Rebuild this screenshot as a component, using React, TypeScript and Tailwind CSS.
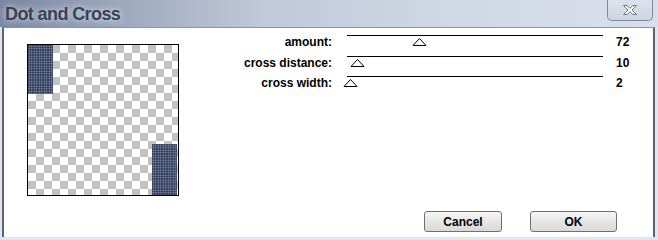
const sliders = [
	{ label: 'amount:', thumb: 65, value: '72', h: 'h-[21px]' },
	{ label: 'cross distance:', thumb: 3, value: '10', h: 'h-[20px]' },
	{ label: 'cross width:', thumb: -4, value: '2', h: 'h-[20px]' }
];

const dots =
	'bg-[#2d3955] bg-[radial-gradient(circle,#8591ad_0.7px,transparent_1px)] bg-size-[2.5px_2.5px]';

const Thumb = ({ left }: { left: number }) => (
	<svg
		className="absolute top-[2px]"
		style={{ left }}
		width="15"
		height="8"
		viewBox="0 0 15 8"
	>
		<path d="M7.5 0.5 L14 7.5 L1 7.5 Z" fill="#fff" stroke="#000" strokeWidth="1" />
	</svg>
);

const App = () => {
	return (
		<div className="flex h-[240px] w-[658px] flex-col overflow-hidden bg-[#dfe6f0] font-['Liberation_Sans',Arial,sans-serif]">
			{/* title bar */}
			<div className="flex h-[27px] shrink-0 items-start bg-[linear-gradient(90deg,#7a87a0_0%,#9ca8bc_18%,#c0c9d8_40%,#d1d9e6_70%,#d8dfea_100%)]">
				<span className="pl-[5px] pt-[4px] text-[18px] font-bold leading-[20px] tracking-[-0.6px] text-[#394354] [text-shadow:0_0_6px_#e8edf5]">
					Dot and Cross
				</span>
				<button className="ml-auto mr-[5px] flex h-[21px] w-[46px] items-center justify-center rounded-b-[5px] border border-t-0 border-[#7f8898] bg-[linear-gradient(#dde3ec,#cdd5e2)]">
					<svg width="16" height="12" viewBox="0 0 16 12">
						<path
							d="M1.5 1.5 H5 L8 4.3 L11 1.5 H14.5 L10 6 L14.5 10.5 H11 L8 7.7 L5 10.5 H1.5 L6 6 Z"
							fill="#fff"
							stroke="#6f7888"
							strokeWidth="1"
							strokeLinejoin="round"
						/>
					</svg>
				</button>
			</div>

			{/* client area */}
			<div className="mb-[3px] ml-[2px] mr-[3px] flex flex-1 flex-col border-x-2 border-t border-x-[#5d6470] border-t-[#8b94a4] bg-white">
				<div className="flex items-start">
					<div className="ml-[23px] mt-[16px] h-[152px] w-[152px] shrink-0 border border-black">
						<div className="relative h-full w-full bg-[conic-gradient(#c2c2c2_25%,#fff_0_50%,#c2c2c2_0_75%,#fff_0)] bg-size-[16px_16px]">
							<div className={`absolute left-0 top-0 h-[49px] w-[25px] ${dots}`} />
							<div className={`absolute bottom-0 right-[1px] h-[51px] w-[25px] ${dots}`} />
						</div>
					</div>

					<div className="ml-[41px] mt-[7px] flex flex-col text-[12px] font-bold leading-[13px] text-black">
						{sliders.map(s => (
							<div key={s.label} className={`flex ${s.h}`}>
								<span className="w-[112px] pt-[1px] text-right">{s.label}</span>
								<div className="relative ml-[15px] w-[256px] border-t border-black">
									<Thumb left={s.thumb} />
								</div>
								<span className="ml-[13px] pt-[1px]">{s.value}</span>
							</div>
						))}
					</div>
				</div>

				<div className="mt-auto flex justify-end gap-[28px] pb-[5px] pr-[36px]">
					<button className="h-[21px] w-[78px] rounded-[3px] border border-[#707070] bg-[linear-gradient(#f6f6f6,#e6e6e6_50%,#d9d9d9)] text-[12px] font-bold text-black">
						Cancel
					</button>
					<button className="h-[21px] w-[87px] rounded-[3px] border border-[#707070] bg-[linear-gradient(#f6f6f6,#e6e6e6_50%,#d9d9d9)] text-[12px] font-bold text-black">
						OK
					</button>
				</div>
			</div>
		</div>
	);
};

export default App;
